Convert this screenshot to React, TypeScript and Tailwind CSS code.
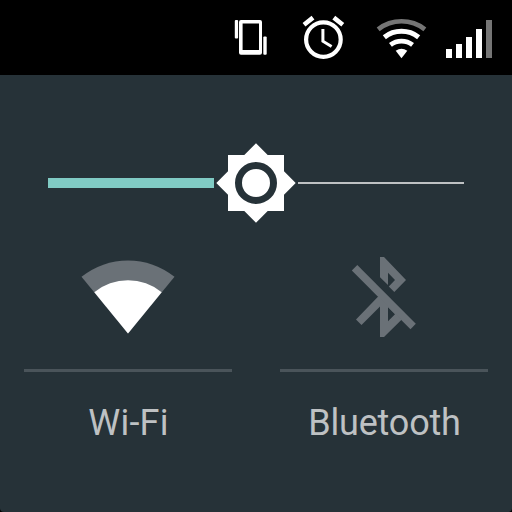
import React from "react";

function StatusBar() {
  return (
    <header className="flex h-[75px] items-start justify-end bg-black pr-5 pt-[14px]">
      <svg className="mr-[35px] h-12 w-[34px]" viewBox="234 14 34 48" fill="white">
        <rect x="234.8" y="20" width="3.3" height="18.5" rx="1" />
        <path fillRule="evenodd" d="M241 20h19a2 2 0 0 1 2 2v30.7a2 2 0 0 1-2 2h-19a2 2 0 0 1-2-2V22a2 2 0 0 1 2-2zM242.6 23.6V50H259V23.6z" />
        <rect x="263.3" y="36.5" width="3.4" height="18.2" rx="1" />
      </svg>
      <svg className="mr-[31px] h-12 w-[42px] overflow-visible" viewBox="303 14 42 48" fill="none" stroke="white">
        <circle cx="323.4" cy="39.6" r="17.3" strokeWidth="4.2" />
        <path d="M322.9 29v12.2l8.7 5.3" strokeWidth="3" />
        <path d="M304 24.7l9-7.1M333.8 17.6l9 7.1" strokeWidth="4.6" />
      </svg>
      <svg className="mr-[19px] h-12 w-[51px]" viewBox="376 14 51 48" fill="white">
        <path fill="#757575" d="M376.7 27.5A40 40 0 0 1 426.3 27.5L423.4 31.2A35.3 35.3 0 0 0 379.6 31.2Z" />
        <path d="M382.8 35.2A30.3 30.3 0 0 1 420.2 35.2L417.1 39.2A25.3 25.3 0 0 0 385.9 39.2Z" />
        <path d="M389 43A20.3 20.3 0 0 1 414 43L411.1 46.7A15.6 15.6 0 0 0 391.9 46.7Z" />
        <path d="M395.7 50.8A10.3 10.3 0 0 1 407.3 50.8L401.5 58.2Z" />
      </svg>
      <div className="flex h-11 items-end gap-1">
        <i className="h-[9px] w-1.5 bg-white" />
        <i className="h-[14px] w-1.5 bg-white" />
        <i className="h-[21px] w-1.5 bg-white" />
        <i className="h-[29px] w-1.5 bg-white" />
        <i className="h-[38px] w-1.5 bg-[#757575]" />
      </div>
    </header>
  );
}

function Brightness() {
  return (
    <div className="mt-[68px] flex h-20 items-center px-12">
      <div className="h-2.5 w-[166px] bg-[#80cbc4]" />
      <svg className="mx-0.5 h-20 w-20" viewBox="216 143 80 80">
        <path fill="white" d="M228 155H244.3L256 143.3L267.7 155H284V171.3L295.7 183L284 194.7V211H267.7L256 222.7L244.3 211H228V194.7L216.3 183L228 171.3Z" />
        <circle cx="256" cy="183" r="17.5" fill="none" stroke="#263238" strokeWidth="7" />
      </svg>
      <div className="h-0.5 w-[166px] bg-[#bec1c3]" />
    </div>
  );
}

function Tile({ label, labelClass, children }: { label: string; labelClass: string; children: React.ReactNode }) {
  return (
    <section className="flex w-[208px] flex-col items-center">
      <div className="h-[114px]">{children}</div>
      <div className="h-[3px] w-full bg-[#4a545a]" />
      <span className={`mt-[30px] text-[36px] leading-[42px] text-[#bec1c3] ${labelClass}`}>{label}</span>
    </section>
  );
}

export default function App() {
  return (
    <div className="h-[512px] w-[512px] overflow-hidden bg-black font-[Roboto,sans-serif]">
      <StatusBar />
      <main className="flex h-[437px] flex-col rounded-b-[4px] bg-[#263238]">
        <Brightness />
        <div className="mt-8 flex gap-12 px-6">
          <Tile label="Wi-Fi" labelClass="pl-px tracking-[0.2px]">
            <svg className="h-[90px] w-24" viewBox="80 255 96 90">
              <path fill="#6a7177" d="M81.5 276.8A74.3 74.3 0 0 1 174.5 276.8L128 333.6Z" />
              <path fill="white" d="M94.3 292.2A53.5 53.5 0 0 1 161.7 292.2L128 333.6Z" />
            </svg>
          </Tile>
          <Tile label="Bluetooth" labelClass="pl-px tracking-[-0.2px]">
            <svg className="h-[90px] w-24" viewBox="336 255 96 90" fill="#6a7177">
              <path d="M380 257H384L406 280L394.3 292L388.8 286.5L395 280L388 272.8V285L380 277.3Z" />
              <path d="M357.3 265L415.8 323.8L410.5 329.2L351.8 270.4Z" />
              <path fillRule="evenodd" d="M377.7 297L356 319.5L361.5 325L380 306.5V337H384L401.5 319.7L380 297ZM388 307.3L395 314.2L388 321.2Z" />
            </svg>
          </Tile>
        </div>
      </main>
    </div>
  );
}
